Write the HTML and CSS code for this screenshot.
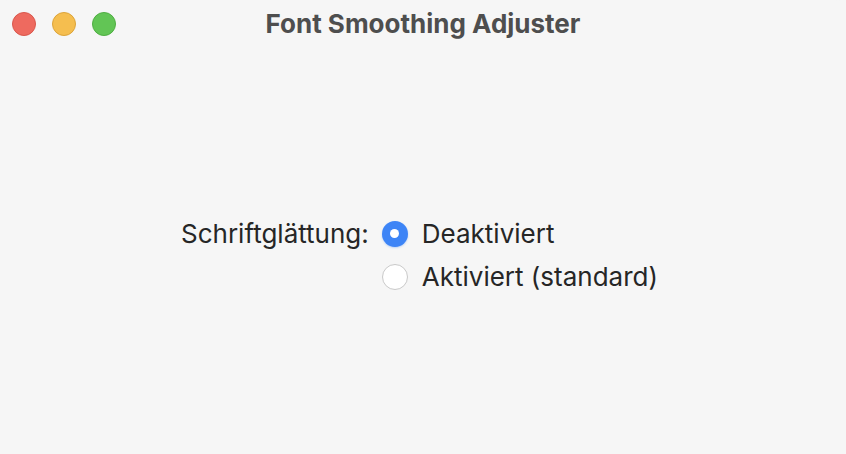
FILE: index.html
```html
<!DOCTYPE html>
<html>
<head>
<meta charset="utf-8">
<link rel="stylesheet" href="styles.css">
</head>
<body>
<div class="window">
  <div class="titlebar">
    <div class="lights">
      <span class="light red"></span>
      <span class="light yellow"></span>
      <span class="light green"></span>
    </div>
    <div class="title">Font Smoothing Adjuster</div>
  </div>
  <div class="content">
    <div class="form">
      <div class="label">Schriftglättung:</div>
      <div class="options">
        <div class="option"><span class="radio checked"></span><span class="opt-text">Deaktiviert</span></div>
        <div class="option"><span class="radio"></span><span class="opt-text">Aktiviert (standard)</span></div>
      </div>
    </div>
  </div>
</div>
</body>
</html>
```
FILE: styles.css
```css
html, body { margin: 0; padding: 0; }
body { background: #f6f6f6; font-family: Inter, "Liberation Sans", sans-serif; }
.window { width: 846px; height: 454px; background: #f6f6f6; border-radius: 10px; overflow: hidden; }
.titlebar { position: relative; height: 48px; display: flex; align-items: center; justify-content: center; }
.lights { position: absolute; left: 12px; top: 12px; display: flex; gap: 16px; }
.light { width: 24px; height: 24px; border-radius: 50%; box-sizing: border-box; }
.red { background: #ee6a5f; border: 1px solid #d9574c; }
.yellow { background: #f5be4f; border: 1px solid #dca43a; }
.green { background: #62c555; border: 1px solid #4fae42; }
.title { font-weight: 700; font-size: 26px; color: #4e4e4e; margin-top: -2px; }
.content { padding-top: 164px; }
.form { display: flex; margin-left: 181px; }
.label { font-size: 26px; color: #262626; height: 43px; line-height: 43px; margin-right: 13px; }
.options { display: flex; flex-direction: column; }
.option { display: flex; align-items: center; height: 43px; }
.radio { width: 26px; height: 26px; border-radius: 50%; box-sizing: border-box; background: #fff; border: 1px solid #c9c9c9; margin-right: 14px; position: relative; }
.radio.checked { background: #3d84f6; border: none; box-shadow: 0 1px 2px rgba(61,132,246,0.3); }
.radio.checked::after { content: ""; position: absolute; left: 8.5px; top: 8.5px; width: 9px; height: 9px; border-radius: 50%; background: #fff; }
.opt-text { font-size: 26px; color: #262626; }
```
